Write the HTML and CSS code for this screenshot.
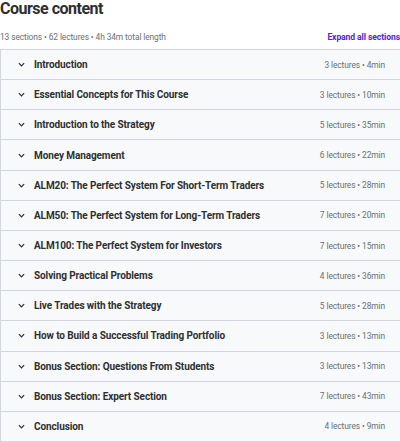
FILE: index.html
```html
<!DOCTYPE html>
<html>
<head>
<meta charset="utf-8">
<link rel="stylesheet" href="styles.css">
</head>
<body>
<div class="page">
  <h2 class="title">Course content</h2>
  <div class="summary">
    <span class="stats">13 sections • 62 lectures • 4h 34m total length</span>
    <span class="expand">Expand all sections</span>
  </div>
  <div class="sections">
    <div class="row"><span class="chev"><svg viewBox="0 0 8 5" width="7" height="5"><path d="M1 1l3 3 3-3" fill="none" stroke="#2d2f31" stroke-width="1.4"/></svg></span><span class="name">Introduction</span><span class="meta">3 lectures • 4min</span></div>
    <div class="row"><span class="chev"><svg viewBox="0 0 8 5" width="7" height="5"><path d="M1 1l3 3 3-3" fill="none" stroke="#2d2f31" stroke-width="1.4"/></svg></span><span class="name">Essential Concepts for This Course</span><span class="meta">3 lectures • 10min</span></div>
    <div class="row"><span class="chev"><svg viewBox="0 0 8 5" width="7" height="5"><path d="M1 1l3 3 3-3" fill="none" stroke="#2d2f31" stroke-width="1.4"/></svg></span><span class="name">Introduction to the Strategy</span><span class="meta">5 lectures • 35min</span></div>
    <div class="row"><span class="chev"><svg viewBox="0 0 8 5" width="7" height="5"><path d="M1 1l3 3 3-3" fill="none" stroke="#2d2f31" stroke-width="1.4"/></svg></span><span class="name">Money Management</span><span class="meta">6 lectures • 22min</span></div>
    <div class="row"><span class="chev"><svg viewBox="0 0 8 5" width="7" height="5"><path d="M1 1l3 3 3-3" fill="none" stroke="#2d2f31" stroke-width="1.4"/></svg></span><span class="name">ALM20: The Perfect System For Short-Term Traders</span><span class="meta">5 lectures • 28min</span></div>
    <div class="row"><span class="chev"><svg viewBox="0 0 8 5" width="7" height="5"><path d="M1 1l3 3 3-3" fill="none" stroke="#2d2f31" stroke-width="1.4"/></svg></span><span class="name">ALM50: The Perfect System for Long-Term Traders</span><span class="meta">7 lectures • 20min</span></div>
    <div class="row"><span class="chev"><svg viewBox="0 0 8 5" width="7" height="5"><path d="M1 1l3 3 3-3" fill="none" stroke="#2d2f31" stroke-width="1.4"/></svg></span><span class="name">ALM100: The Perfect System for Investors</span><span class="meta">7 lectures • 15min</span></div>
    <div class="row"><span class="chev"><svg viewBox="0 0 8 5" width="7" height="5"><path d="M1 1l3 3 3-3" fill="none" stroke="#2d2f31" stroke-width="1.4"/></svg></span><span class="name">Solving Practical Problems</span><span class="meta">4 lectures • 36min</span></div>
    <div class="row"><span class="chev"><svg viewBox="0 0 8 5" width="7" height="5"><path d="M1 1l3 3 3-3" fill="none" stroke="#2d2f31" stroke-width="1.4"/></svg></span><span class="name">Live Trades with the Strategy</span><span class="meta">5 lectures • 28min</span></div>
    <div class="row"><span class="chev"><svg viewBox="0 0 8 5" width="7" height="5"><path d="M1 1l3 3 3-3" fill="none" stroke="#2d2f31" stroke-width="1.4"/></svg></span><span class="name">How to Build a Successful Trading Portfolio</span><span class="meta">3 lectures • 13min</span></div>
    <div class="row"><span class="chev"><svg viewBox="0 0 8 5" width="7" height="5"><path d="M1 1l3 3 3-3" fill="none" stroke="#2d2f31" stroke-width="1.4"/></svg></span><span class="name">Bonus Section: Questions From Students</span><span class="meta">3 lectures • 13min</span></div>
    <div class="row"><span class="chev"><svg viewBox="0 0 8 5" width="7" height="5"><path d="M1 1l3 3 3-3" fill="none" stroke="#2d2f31" stroke-width="1.4"/></svg></span><span class="name">Bonus Section: Expert Section</span><span class="meta">7 lectures • 43min</span></div>
    <div class="row"><span class="chev"><svg viewBox="0 0 8 5" width="7" height="5"><path d="M1 1l3 3 3-3" fill="none" stroke="#2d2f31" stroke-width="1.4"/></svg></span><span class="name">Conclusion</span><span class="meta">4 lectures • 9min</span></div>
  </div>
</div>
</body>
</html>
```
FILE: styles.css
```css
html, body {
  margin: 0;
  padding: 0;
  background: #fff;
  overflow: hidden;
}
.page {
  width: 410px;
  font-family: "Roboto", "Liberation Sans", sans-serif;
  color: #2d2f31;
}
.title {
  margin: 0;
  font-size: 16px;
  line-height: 18px;
  font-weight: 700;
  letter-spacing: -0.5px;
}
.summary {
  display: flex;
  justify-content: space-between;
  align-items: center;
  height: 16px;
  margin-top: 11px;
  margin-bottom: 4px;
  width: 400px;
}
.stats {
  font-size: 8.4px;
  letter-spacing: -0.1px;
  color: #6a6f73;
}
.expand {
  font-size: 8.6px;
  font-weight: 700;
  letter-spacing: -0.1px;
  color: #5624d0;
  white-space: nowrap;
}
.sections {
  border: 1px solid #d1d7dc;
  border-bottom: none;
}
.row {
  display: flex;
  align-items: center;
  box-sizing: border-box;
  height: 30.17px;
  background: #f7f9fa;
  border-bottom: 1px solid #d1d7dc;
  padding: 0 24px 0 17px;
}
.chev {
  display: flex;
  width: 16px;
}
.name {
  flex: 1;
  font-size: 10px;
  font-weight: 700;
  letter-spacing: -0.1px;
}
.meta {
  font-size: 8.4px;
  letter-spacing: -0.1px;
  color: #6a6f73;
}
```
